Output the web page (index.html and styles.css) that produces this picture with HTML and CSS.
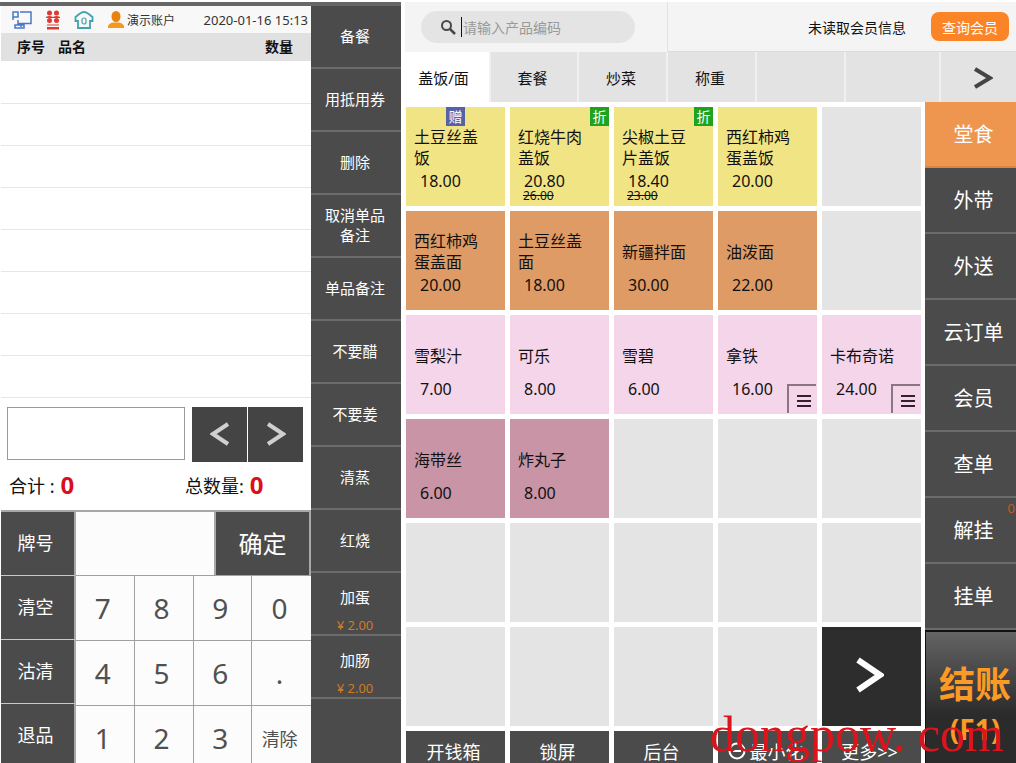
FILE: index.html
```html
<!DOCTYPE html>
<html lang="zh-CN">
<head>
<meta charset="utf-8">
<title>收银</title>
<link rel="stylesheet" href="styles.css">
</head>
<body>
<div class="app">
  <section class="order">
    <header class="status">
      <svg class="icon" viewBox="0 0 20 18" width="20" height="18" fill="none" stroke="#4a78c8" stroke-width="1.5"><path d="M8 1h11v11.500H6V9M1 1h5v5H1zM1 6v3M9 13v3M3 14v3h9v-3z"/></svg>
      <svg class="icon" viewBox="0 0 14 20" width="14" height="20" fill="#e03a30"><circle cx="3.500" cy="3" r="2.500"/><circle cx="10.500" cy="3" r="2.500"/><path d="M0 7q3.500-2 7 0q3.500-2 7 0v1H0z"/><circle cx="3.500" cy="10.500" r="2.500"/><circle cx="10.500" cy="10.500" r="2.500"/><path d="M1 14.500h12v1H1zM1 17h12v2.500H1z"/></svg>
      <svg class="icon" viewBox="0 0 20 18" width="20" height="18" fill="none" stroke="#3fa3ad" stroke-width="1.800"><path d="M6 2.500q4-3 8 0L18.500 6v4H16v7H4v-7H1.500V6z"/><rect x="8" y="7" width="4" height="6" rx="2" stroke-width="1.200"/></svg>
      <svg class="icon" viewBox="0 0 16 17" width="16" height="17"><ellipse cx="8" cy="5.500" rx="4.500" ry="5.500" fill="#e8820c"/><path d="M0 17v-2q1-3 5-3.500h6q4 .5 5 3.500v2z" fill="#f39a1c"/></svg>
      <span class="user">演示账户</span>
      <time class="time">2020-01-16 15:13</time>
    </header>
    <table class="lines">
      <thead><tr><th class="col-no">序号</th><th>品名</th><th class="col-qty">数量</th></tr></thead>
      <tbody>
        <tr><td colspan="3"></td></tr><tr><td colspan="3"></td></tr>
        <tr><td colspan="3"></td></tr><tr><td colspan="3"></td></tr>
        <tr><td colspan="3"></td></tr><tr><td colspan="3"></td></tr>
        <tr><td colspan="3"></td></tr><tr><td colspan="3"></td></tr>
      </tbody>
    </table>
    <div class="entry">
      <input class="entry-input" type="text" aria-label="备注">
      <button class="pager" aria-label="上一页"><svg viewBox="0 0 20 24" width="20" height="24"><path d="M18 2L3 12l15 10"/></svg></button>
      <button class="pager" aria-label="下一页"><svg viewBox="0 0 20 24" width="20" height="24"><path d="M2 2l15 10-15 10"/></svg></button>
    </div>
    <div class="totals">
      <div class="total">合计 : <b>0</b></div>
      <div class="total">总数量: <b>0</b></div>
    </div>
    <div class="keypad">
      <div class="actions">
        <label class="action" for="tag">牌号</label>
        <button class="action">清空</button>
        <button class="action">沽清</button>
        <button class="action">退品</button>
      </div>
      <div class="pad">
        <div class="confirm-row">
          <input class="tag-input" id="tag" type="text">
          <button class="confirm">确定</button>
        </div>
        <div class="keys">
          <button class="key">7</button><button class="key">8</button><button class="key">9</button><button class="key">0</button>
          <button class="key">4</button><button class="key">5</button><button class="key">6</button><button class="key">.</button>
          <button class="key">1</button><button class="key">2</button><button class="key">3</button><button class="key key-clear">清除</button>
        </div>
      </div>
    </div>
  </section>

  <nav class="tools">
    <button class="tool">备餐</button>
    <button class="tool">用抵用券</button>
    <button class="tool">删除</button>
    <button class="tool">取消单品<br>备注</button>
    <button class="tool">单品备注</button>
    <button class="tool">不要醋</button>
    <button class="tool">不要姜</button>
    <button class="tool">清蒸</button>
    <button class="tool">红烧</button>
    <button class="tool tool-priced">加蛋<span class="extra">¥ 2.00</span></button>
    <button class="tool tool-priced">加肠<span class="extra">¥ 2.00</span></button>
  </nav>

  <main class="main">
    <header class="top">
      <div class="search-area">
        <label class="search">
          <svg viewBox="0 0 16 16" width="16" height="16" fill="none" stroke="#484848"><circle cx="6.500" cy="6.500" r="4.500" stroke-width="2"/><path d="M10 10l5 5" stroke-width="2.500"/></svg>
          <span class="caret"></span>
          <input class="search-input" type="text" placeholder="请输入产品编码" aria-label="产品编码">
        </label>
      </div>
      <div class="member">
        <span>未读取会员信息</span>
        <button class="member-button">查询会员</button>
      </div>
    </header>
    <nav class="tabs">
      <button class="tab tab-active">盖饭/面</button>
      <button class="tab">套餐</button>
      <button class="tab">炒菜</button>
      <button class="tab">称重</button>
      <span class="tab"></span>
      <span class="tab"></span>
      <button class="tab tab-next" aria-label="更多分类"><svg viewBox="0 0 20 22" width="20" height="22"><path d="M2 2l15 9-15 9"/></svg></button>
    </nav>
    <div class="body">
      <div class="grid">
        <div class="cell"><button class="card yellow"><span class="name">土豆丝盖饭</span><span class="price">18.00</span></button><span class="badge gift">赠</span></div>
        <div class="cell"><button class="card yellow"><span class="name">红烧牛肉盖饭</span><span class="price">20.80</span><s class="old">26.00</s></button><span class="badge sale">折</span></div>
        <div class="cell"><button class="card yellow"><span class="name">尖椒土豆片盖饭</span><span class="price">18.40</span><s class="old">23.00</s></button><span class="badge sale">折</span></div>
        <div class="cell"><button class="card yellow"><span class="name">西红柿鸡蛋盖饭</span><span class="price">20.00</span></button></div>
        <div class="cell"></div>

        <div class="cell"><button class="card orange"><span class="name">西红柿鸡蛋盖面</span><span class="price">20.00</span></button></div>
        <div class="cell"><button class="card orange"><span class="name">土豆丝盖面</span><span class="price">18.00</span></button></div>
        <div class="cell"><button class="card orange"><span class="name">新疆拌面</span><span class="price">30.00</span></button></div>
        <div class="cell"><button class="card orange"><span class="name">油泼面</span><span class="price">22.00</span></button></div>
        <div class="cell"></div>

        <div class="cell"><button class="card pink"><span class="name">雪梨汁</span><span class="price">7.00</span></button></div>
        <div class="cell"><button class="card pink"><span class="name">可乐</span><span class="price">8.00</span></button></div>
        <div class="cell"><button class="card pink"><span class="name">雪碧</span><span class="price">6.00</span></button></div>
        <div class="cell"><button class="card pink"><span class="name">拿铁</span><span class="price">16.00</span></button><button class="options" aria-label="规格"><svg viewBox="0 0 14 14" width="14" height="14"><path d="M0 2h14M0 7h14M0 12h14"/></svg></button></div>
        <div class="cell"><button class="card pink"><span class="name">卡布奇诺</span><span class="price">24.00</span></button><button class="options" aria-label="规格"><svg viewBox="0 0 14 14" width="14" height="14"><path d="M0 2h14M0 7h14M0 12h14"/></svg></button></div>

        <div class="cell"><button class="card mauve"><span class="name">海带丝</span><span class="price">6.00</span></button></div>
        <div class="cell"><button class="card mauve"><span class="name">炸丸子</span><span class="price">8.00</span></button></div>
        <div class="cell"></div><div class="cell"></div><div class="cell"></div>

        <div class="cell"></div><div class="cell"></div><div class="cell"></div><div class="cell"></div><div class="cell"></div>

        <div class="cell"></div><div class="cell"></div><div class="cell"></div><div class="cell"></div>
        <div class="cell"><button class="card next" aria-label="下一页"><svg viewBox="0 0 28 36" width="28" height="36"><path d="M2 3l22 15L2 33"/></svg></button></div>

        <button class="foot">开钱箱</button>
        <button class="foot">锁屏</button>
        <button class="foot">后台</button>
        <button class="foot"><svg viewBox="0 0 18 18" width="18" height="18" fill="none" stroke="#fff" stroke-width="2"><circle cx="9" cy="9" r="7.500"/><path d="M5 9h8"/></svg>最小化</button>
        <button class="foot">更多&gt;&gt;</button>
      </div>
      <nav class="side">
        <button class="mode mode-active">堂食</button>
        <button class="mode">外带</button>
        <button class="mode">外送</button>
        <button class="mode">云订单</button>
        <button class="mode">会员</button>
        <button class="mode">查单</button>
        <button class="mode">解挂<span class="count">0</span></button>
        <button class="mode">挂单</button>
        <button class="checkout">结账<span class="hotkey">(F1)</span></button>
      </nav>
    </div>
  </main>
  <div class="watermark">dongpow. com</div>
</div>
</body>
</html>
```

FILE: styles.css
```css
* { box-sizing: border-box; }

body {
  margin: 0;
  background: #fff;
  color: #111;
  font-family: "Noto Sans", "Noto Sans CJK SC", sans-serif;
  font-size: 15px;
}

button, input {
  margin: 0;
  padding: 0;
  border: 0;
  border-radius: 0;
  color: inherit;
  font: inherit;
}

.app {
  position: relative;
  display: grid;
  grid-template-columns: minmax(0, 311fr) minmax(0, 90fr) minmax(0, 615fr);
  height: 100vh;
  padding-top: 2px;
  overflow: hidden;
}

/* Order panel */
.order {
  padding-left: 1px;
  border-top: 4px solid #666;
}

.status {
  display: flex;
  align-items: center;
  height: 27px;
  padding: 0 3px 0 11px;
  background: #f8f8f8;
  color: #333;
}
.icon { margin-right: 14px; flex: none; }
.icon:nth-child(4) { margin-right: 3px; }
.user { font-size: 12px; }
.time { margin-left: auto; font-size: 13px; white-space: nowrap; }

.lines {
  width: 100%;
  border-collapse: collapse;
  table-layout: fixed;
}
.lines th {
  height: 28px;
  padding: 0;
  background: #e1e1e1;
  font-size: 14px;
  line-height: 20px;
  text-align: left;
}
.lines .col-no { width: 57px; padding-left: 16px; }
.lines .col-qty { width: 64px; padding-right: 18px; text-align: right; }
.lines td {
  height: 42px;
  padding: 0;
  border-bottom: 1px solid #e6e6e6;
}

.entry {
  display: flex;
  gap: 1px;
  margin-top: 9px;
  padding: 0 8px 0 6px;
}
.entry-input {
  flex: 1;
  min-width: 0;
  height: 53px;
  margin-right: 6px;
  border: 1px solid #999;
  background: #fff;
}
.pager {
  display: grid;
  place-items: center;
  width: 55px;
  height: 55px;
  background: #444;
}
.pager path { fill: none; stroke: #d0d0d0; stroke-width: 4; }

.totals {
  display: grid;
  grid-template-columns: 176fr 126fr;
  height: 48px;
  padding: 0 0 2px 8px;
}
.total {
  display: flex;
  align-items: center;
  gap: 6px;
  font-size: 18px;
}
.total b { color: #d8101c; font-size: 24px; }

.keypad {
  display: grid;
  grid-template-columns: minmax(0, 75fr) minmax(0, 235fr);
  border-top: 2px solid #a8a8a8;
}
.action {
  display: grid;
  place-items: center;
  width: 100%;
  height: 64px;
  padding: 0 4px 2px 0;
  border-right: 2px solid #a8a8a8;
  border-bottom: 1px solid #c8c8c8;
  background: #4b4b4b;
  color: #fff;
  font-size: 18px;
}
.confirm-row {
  display: grid;
  grid-template-columns: minmax(0, 138fr) minmax(0, 97fr);
  height: 64px;
  border-bottom: 1px solid #a0a0a0;
}
.tag-input { width: 100%; background: #fcfcfc; }
.confirm {
  padding-bottom: 2px;
  border: solid #a8a8a8;
  border-width: 0 2px;
  background: #4b4b4b;
  color: #fff;
  font-size: 24px;
}
.keys {
  display: grid;
  grid-template-columns: repeat(4, minmax(0, 1fr));
  grid-auto-rows: 65px;
}
.key {
  padding-right: 4px;
  border-right: 1px solid #a0a0a0;
  border-bottom: 1px solid #a0a0a0;
  background: #fcfcfc;
  color: #505050;
  font-size: 28px;
}
.key:nth-child(4n) { border-right: 0; }
.key-clear { font-size: 18px; }

/* Item tools */
.tools {
  display: flex;
  flex-direction: column;
  border-top: 4px solid #666;
  background: #4b4b4b;
}
.tool {
  flex: none;
  height: 63px;
  padding: 0 2px 2px 0;
  border-bottom: 2px solid #6b6b6b;
  background: #4b4b4b;
  color: #fff;
  font-size: 15px;
  line-height: 20px;
}
.tool-priced { padding-top: 14px; }
.extra {
  display: block;
  margin-top: 8px;
  color: #d07a20;
  font-size: 13px;
}

/* Products */
.main {
  display: flex;
  flex-direction: column;
}
.top {
  display: grid;
  grid-template-columns: minmax(0, 266fr) minmax(0, 349fr);
  height: 50px;
}
.search-area {
  margin-left: 4px;
  padding: 9px 32px 0 16px;
  background: #f4f4f4;
}
.search {
  display: flex;
  align-items: center;
  height: 32px;
  padding-left: 19px;
  border-radius: 16px;
  background: #e4e4e4;
}
.caret {
  width: 1px;
  height: 20px;
  margin: 0 1px 0 5px;
  background: #111;
}
.search-input {
  flex: 1;
  min-width: 0;
  background: none;
  font-size: 14px;
}
.search-input::placeholder { color: #999; }
.member {
  display: flex;
  align-items: center;
  justify-content: flex-end;
  gap: 25px;
  padding-right: 7px;
  border-left: 1px solid #e2e2e2;
  border-bottom: 1px solid #dcdcdc;
  background: #f4f4f4;
  font-size: 14px;
}
.member-button {
  height: 29px;
  padding: 0 11px;
  border-radius: 8px;
  background: #fb8427;
  color: #fff;
}

.tabs {
  display: grid;
  grid-template-columns: 90fr 88fr 89fr 89fr 89fr 95fr 75fr;
  height: 50px;
}
.tab {
  padding-right: 3px;
  border-right: 2px solid #f0f0f0;
  background: #e3e3e3;
  font-size: 15px;
}
.tab-active { background: #fff; }
.tab-next {
  display: grid;
  place-items: center;
  padding: 2px 0 0 8px;
  border-right: 0;
}
.tab-next path { fill: none; stroke: #444; stroke-width: 4; }

.body {
  display: grid;
  grid-template-columns: minmax(0, 524fr) minmax(0, 91fr);
}
.grid {
  display: grid;
  grid-template-columns: repeat(5, minmax(0, 1fr));
  grid-template-rows: repeat(6, 99px) 42px;
  gap: 5px;
  padding: 5px 4px 0 5px;
}
.cell {
  position: relative;
  background: #e4e4e4;
}
.card {
  display: flex;
  flex-direction: column;
  width: 100%;
  height: 100%;
  padding: 20px 20px 0 8px;
  text-align: left;
}
.yellow { background: #f1e485; }
.orange { background: #de9b65; }
.pink { background: #f5d5e9; }
.mauve { background: #c894a6; }
.name {
  display: flex;
  align-items: center;
  height: 42px;
  font-size: 16px;
  line-height: 21px;
}
.price {
  padding-left: 6px;
  font-size: 16px;
  line-height: 25px;
}
.old {
  padding-left: 5px;
  font-size: 12px;
  line-height: 4px;
}
.badge {
  position: absolute;
  top: 0;
  right: 0;
  width: 19px;
  height: 19px;
  color: #fff;
  font-size: 14px;
  line-height: 20px;
  text-align: center;
}
.sale { background: #1ea31e; }
.gift { right: 40px; background: #5662a8; }
.options {
  position: absolute;
  right: 1px;
  bottom: 1px;
  display: grid;
  place-items: center;
  width: 29px;
  height: 29px;
  padding: 2px 0 0 3px;
  border: solid #8a7584;
  border-width: 2px 0 0 2px;
  background: none;
}
.options path { stroke: #33202c; stroke-width: 2; }
.next {
  display: grid;
  place-items: center;
  padding: 0 4px 4px 0;
  background: #2d2d2d;
}
.next path { fill: none; stroke: #fff; stroke-width: 6; }
.foot {
  display: flex;
  align-items: center;
  justify-content: center;
  gap: 4px;
  padding: 0 4px 2px 0;
  background: #4b4b4b;
  color: #fff;
  font-size: 18px;
  white-space: nowrap;
}

/* Order modes */
.side {
  display: flex;
  flex-direction: column;
  background: #4b4b4b;
}
.mode {
  position: relative;
  flex: none;
  height: 66px;
  padding: 0 0 2px 6px;
  border-bottom: 2px solid #6b6b6b;
  background: #4b4b4b;
  color: #fff;
  font-size: 20px;
}
.mode-active { background: #ee9550; border-color: #d98544; }
.count {
  position: absolute;
  top: 1px;
  right: 1px;
  color: #c85a1e;
  font-size: 13px;
}
.checkout {
  flex: none;
  height: 140px;
  padding: 10px 0 0 8px;
  border: solid #111;
  border-width: 2px 0 0 1px;
  background: linear-gradient(#646464, #2b2b2b 60%);
  color: #fb9a24;
  font-size: 36px;
  font-weight: bold;
  line-height: 46px;
  white-space: nowrap;
}
.hotkey {
  display: block;
  font-size: 28px;
  line-height: 42px;
}

.watermark {
  position: absolute;
  right: 12px;
  bottom: 2px;
  color: #dc141c;
  font-family: "Liberation Serif", serif;
  font-size: 50px;
  line-height: 54px;
  pointer-events: none;
}
```
